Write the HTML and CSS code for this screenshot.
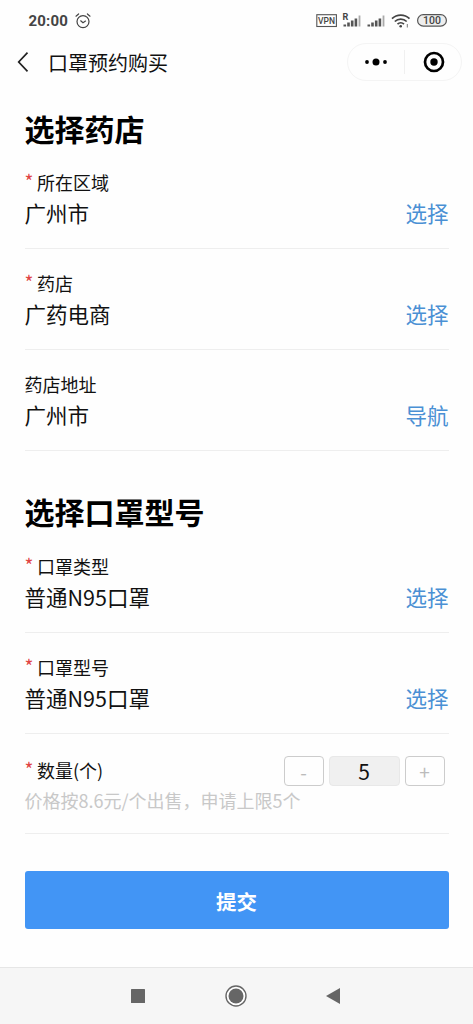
FILE: index.html
```html
<!DOCTYPE html>
<html lang="zh-CN">
<head>
<meta charset="utf-8">
<meta name="viewport" content="width=device-width, initial-scale=1">
<title>口罩预约购买</title>
<link rel="stylesheet" href="styles.css">
</head>
<body>
<div class="screen">
  <header class="status">
    <span class="clock">20:00</span>
    <svg class="alarm" width="16" height="16" viewBox="0 0 16 16" fill="none" stroke="#444" stroke-width="1.2" stroke-linecap="round"><circle cx="8" cy="8.6" r="6"/><path d="M1 3.2 3.6 1M15 3.2 12.4 1M5.7 7.8 8 9.7l2.5-1.6"/></svg>
    <svg class="indicators" width="132" height="18" viewBox="0 0 132 18">
      <rect x=".8" y="2.700" width="19.600" height="11.800" fill="none" stroke="#555" stroke-width="1.100"/>
      <text class="vpn" x="10.600" y="11.700" text-anchor="middle">VPN</text>
      <text class="roam" x="26.600" y="7.500">R</text>
      <g fill="#555"><path d="M27.500 12.500h2.600v2h-2.600zM31.200 10.500h2.600v4h-2.600zM34.900 8.500h2.600v6h-2.600zM38.600 6.500h2.600v8h-2.600zM51.500 12.500h2.600v2h-2.600zM55.200 10.500h2.600v4h-2.600zM58.900 8.500h2.600v6h-2.600zM62.600 6.500h2.600v8h-2.600z"/></g>
      <path d="M43.500 3.500v11M67.500 3.500v11" stroke="#aaa" stroke-width="1.800"/>
      <g fill="none" stroke="#444" stroke-width="1.700"><path d="M76 6.700a12.500 12.500 0 0 1 17.500 0M78.800 9.500a8.600 8.600 0 0 1 11.900 0M81.500 12.100a4.700 4.700 0 0 1 6.500 0"/></g>
      <circle cx="84.700" cy="14.300" r="1.300" fill="#444"/><path d="M91.300 12v3.500" stroke="#777"/>
      <rect x="101.600" y="2.700" width="28.800" height="11.400" rx="5.700" fill="#eee" stroke="#555" stroke-width="1.200"/>
      <text class="battery" x="116" y="12.200" text-anchor="middle">100</text>
    </svg>
  </header>
  <nav class="titlebar">
    <svg class="back" width="12" height="22" viewBox="0 0 12 22" fill="none" stroke="#222" stroke-width="1.700"><path d="M10.500 1.700 1.700 11l8.800 9.300"/></svg>
    <h1 class="title">口罩预约购买</h1>
    <div class="capsule">
      <svg width="24" height="10" viewBox="0 0 24 10"><circle cx="3" cy="5" r="1.900"/><circle cx="12" cy="5" r="3.500"/><circle cx="21" cy="5" r="1.900"/></svg>
      <span class="split"></span>
      <svg width="22" height="22" viewBox="0 0 22 22"><circle cx="11" cy="11" r="9" fill="none" stroke="#000" stroke-width="2.700"/><circle cx="11" cy="11" r="3.700"/></svg>
    </div>
  </nav>
  <main class="form">
    <section class="group">
      <h2 class="heading">选择药店</h2>
      <div class="row first">
        <div class="label"><span class="req">*</span>所在区域</div>
        <div class="line"><span>广州市</span><a class="action">选择</a></div>
      </div>
      <div class="row">
        <div class="label"><span class="req">*</span>药店</div>
        <div class="line"><span>广药电商</span><a class="action">选择</a></div>
      </div>
      <div class="row">
        <div class="label">药店地址</div>
        <div class="line"><span>广州市</span><a class="action">导航</a></div>
      </div>
    </section>
    <section class="group">
      <h2 class="heading">选择口罩型号</h2>
      <div class="row first">
        <div class="label"><span class="req">*</span>口罩类型</div>
        <div class="line"><span>普通N95口罩</span><a class="action">选择</a></div>
      </div>
      <div class="row">
        <div class="label"><span class="req">*</span>口罩型号</div>
        <div class="line"><span>普通N95口罩</span><a class="action">选择</a></div>
      </div>
      <div class="row quantity">
        <div class="amount">
          <div class="label"><span class="req">*</span>数量(个)</div>
          <div class="stepper"><span class="step">-</span><span class="count">5</span><span class="step">+</span></div>
        </div>
        <div class="hint">价格按8.6元/个出售，申请上限5个</div>
      </div>
    </section>
    <button class="submit">提交</button>
  </main>
  <footer class="system">
    <svg width="14" height="14" viewBox="0 0 14 14"><rect width="14" height="14" rx=".5" fill="#666"/></svg>
    <svg width="22" height="22" viewBox="0 0 22 22"><circle cx="11" cy="11" r="10" fill="#fff" stroke="#666" stroke-width="1.400"/><circle cx="11" cy="11" r="7.500" fill="#666"/></svg>
    <svg width="14" height="16" viewBox="0 0 14 16"><path d="M14 0v16L0 8z" fill="#666"/></svg>
  </footer>
</div>
</body>
</html>
```
FILE: styles.css
```css
* { box-sizing: border-box; }
body {
  margin: 0;
  background: #fefefe;
  color: #111;
  font-family: "Noto Sans CJK SC", sans-serif;
}
svg { display: block; flex: none; }
.screen { display: flex; flex-direction: column; height: 1024px; }

.status { display: flex; align-items: center; height: 42px; padding: 0 25px 0 28.500px; }
.clock { font: 700 15px/20px Roboto, sans-serif; color: #444; width: 40.500px; letter-spacing: .2px; }
.alarm { margin-left: 6px; }
.indicators { margin: 0 0 0 auto; }
.vpn { font: 500 8.500px Roboto, sans-serif; fill: #444; }
.roam { font: 700 9px Roboto, sans-serif; fill: #444; }
.battery { font: 500 10.500px Roboto, sans-serif; fill: #444; }

.titlebar { display: flex; align-items: center; height: 40px; padding: 0 11px 0 17px; }
.title { margin: 2px 0 0 19px; font-size: 20px; font-weight: 400; line-height: 30px; }
.capsule {
  display: flex;
  align-items: center;
  width: 115px;
  height: 38px;
  margin-left: auto;
  padding: 0 16px;
  border: 1px solid #f4f4f4;
  border-radius: 19px;
}
.split { width: 1px; height: 24px; margin: 0 18px 0 16px; background: #f0f0f0; }

.form { padding: 24px 24.500px 0; }
.heading { margin: 0; color: #000; font-size: 30px; font-weight: 700; line-height: 44px; }
.group + .group { margin-top: 38px; }
.row { height: 101px; padding-top: 20px; border-bottom: 1px solid #eee; }
.row.first { height: 99px; padding-top: 19px; }
.group + .group .first { height: 100px; padding-top: 20px; }
.label { font-size: 18px; line-height: 26px; }
.row:not(.first) .label { padding-top: 1px; }
.req {
  display: inline-block;
  width: 12.500px;
  color: #e04444;
  font-size: 19px;
  line-height: 20px;
  vertical-align: 1px;
}
.line { display: flex; justify-content: space-between; padding-top: 1px; font-size: 21.500px; line-height: 34px; }
.action { color: #4a90d4; }
.amount { display: flex; justify-content: space-between; align-items: center; height: 30px; }
.amount .label { margin-top: -4px; }
.group .quantity { height: 100px; padding-top: 22px; }
.stepper { display: flex; gap: 5px; margin-right: 4px; }
.step, .count {
  width: 40px;
  height: 30px;
  border: 1px solid #ccc;
  border-radius: 4px;
  color: #bbb;
  font-size: 19px;
  line-height: 29px;
  text-align: center;
}
.count { width: 71px; border-color: #e8e8e8; background: #f0f0f0; color: #111; font-size: 21px; }
.hint { margin-top: -1px; color: #c8c8c8; font-size: 18px; line-height: 30px; }
.submit {
  display: block;
  width: 100%;
  height: 58px;
  margin: 37px 0 0;
  padding: 0;
  border: 0;
  border-radius: 3px;
  background: #4295f5;
  color: #fff;
  font: 700 20.500px/60px "Noto Sans CJK SC", sans-serif;
}

.system {
  display: flex;
  align-items: center;
  height: 57px;
  margin-top: auto;
  padding-left: 131px;
  gap: 80px;
  border-top: 1px solid #e6e6e6;
  background: #f6f6f6;
}
.system svg:last-child { margin-left: -1px; }
```
